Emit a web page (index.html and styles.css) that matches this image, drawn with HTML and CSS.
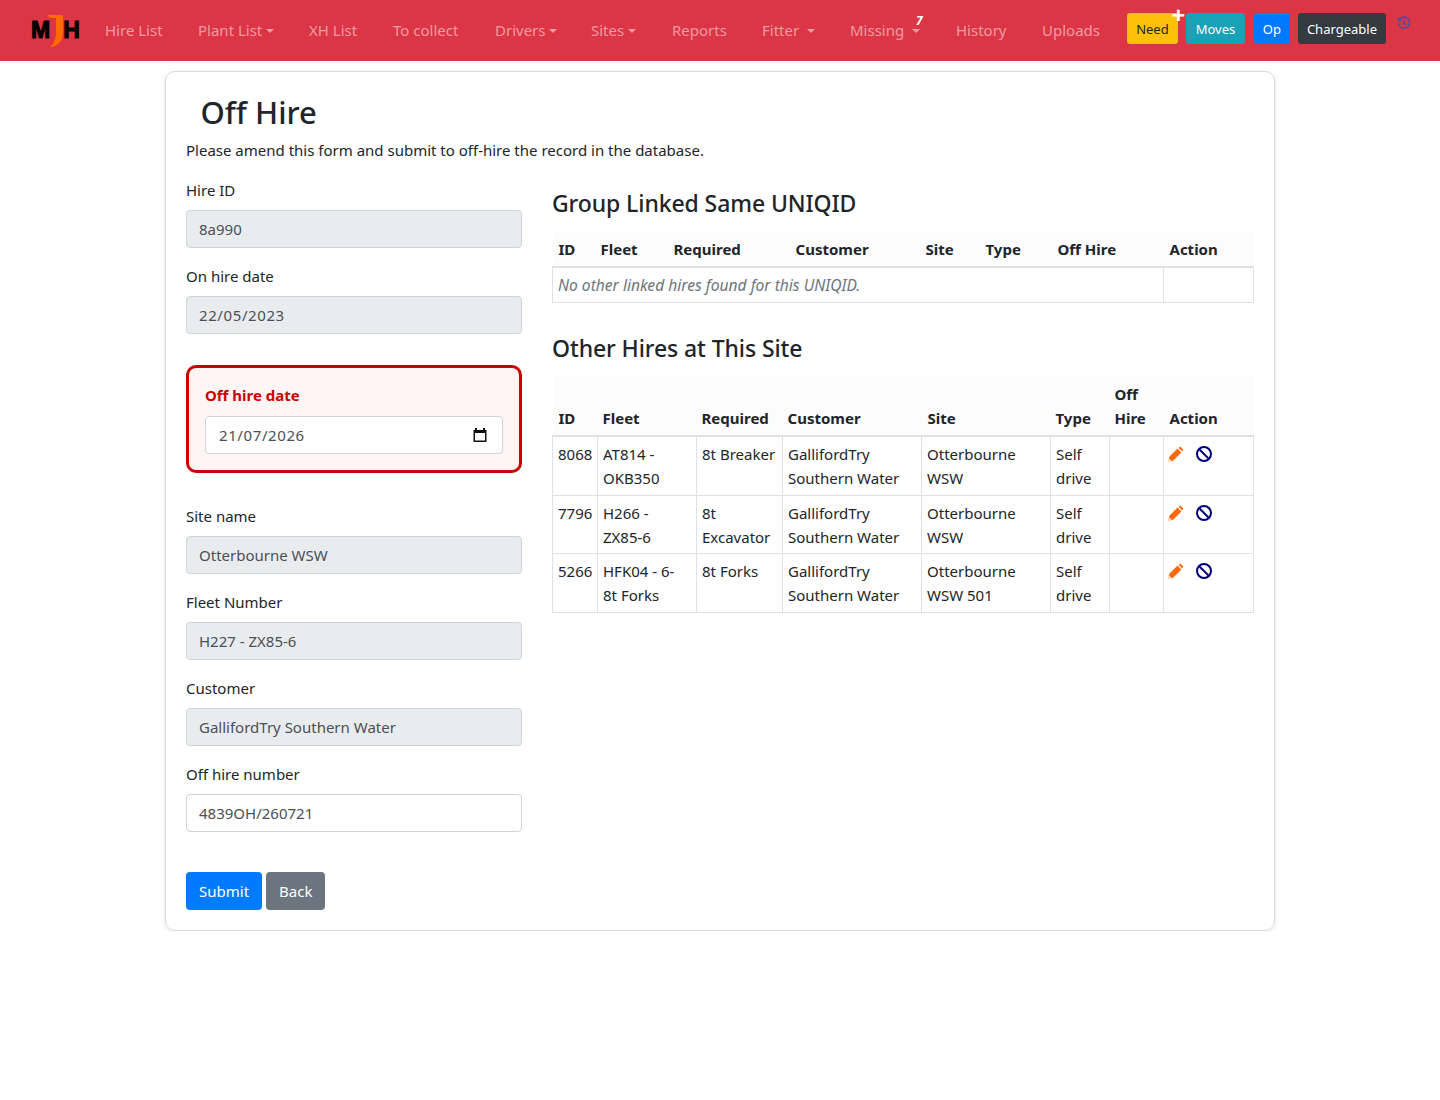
FILE: index.html
```html
<!DOCTYPE html>
<html lang="en">
<head>
    <meta charset="UTF-8">
    <meta name="viewport" content="width=device-width, initial-scale=1.0">
    <title>Off Hire</title>
    <link rel="stylesheet" href="styles.css">
</head>
<body>
    <nav class="navbar">
        <a class="brand" href="#">
            <span class="logo-word">M<span class="logo-gap"></span>H</span>
            <svg class="logo-j" width="17" height="34" viewBox="0 0 17 34"><path d="M0 1 L16 1 L16 19 C16 27 11 32 3 33.5 C7 29 9 25 9 18 L9 4 L3 4 Z" fill="#ff6a00"/></svg>
        </a>
        <ul class="nav-links">
            <li class="w-hire"><a href="#">Hire List</a></li>
            <li class="w-plant"><a href="#" class="caret">Plant List</a></li>
            <li class="w-xh"><a href="#">XH List</a></li>
            <li class="w-collect"><a href="#">To collect</a></li>
            <li class="w-drivers"><a href="#" class="caret">Drivers</a></li>
            <li class="w-sites"><a href="#" class="caret">Sites</a></li>
            <li class="w-reports"><a href="#">Reports</a></li>
            <li class="w-fitter"><a href="#" class="caret wide">Fitter</a></li>
            <li class="w-missing"><a href="#" class="caret wide">Missing</a><span class="count">7</span></li>
            <li class="w-history"><a href="#">History</a></li>
            <li class="w-uploads"><a href="#">Uploads</a></li>
        </ul>
        <div class="nav-btns">
            <a class="btn-sm need" href="#">Need<span class="plus">+</span></a>
            <a class="btn-sm moves" href="#">Moves</a>
            <a class="btn-sm op" href="#">Op</a>
            <a class="btn-sm chargeable" href="#">Chargeable</a>
            <svg class="history-icon" width="14" height="14" viewBox="0 0 16 16" fill="none" stroke="#3f51a5" stroke-width="1.6"><path d="M2.6 4.2A6.4 6.4 0 1 1 1.7 8.6"/><path d="M1.6 1.6v3.4h3.4" stroke-width="1.4"/><path d="M8 4.4V8.4l2.6 1.6"/></svg>
        </div>
    </nav>

    <div class="container">
        <div class="card">
            <h2 class="page-title">Off Hire</h2>
            <p class="intro">Please amend this form and submit to off-hire the record in the database.</p>

            <div class="row">
                <form class="form-col">
                    <div class="form-group">
                        <label>Hire ID</label>
                        <div class="form-control readonly">8a990</div>
                    </div>
                    <div class="form-group">
                        <label>On hire date</label>
                        <div class="form-control readonly date-text">22/05/2023</div>
                    </div>
                    <div class="highlight-box">
                        <label>Off hire date</label>
                        <div class="form-control date-field date-text">
                            <span>21/07/2026</span>
                            <svg width="16" height="16" viewBox="0 0 16 16"><path d="M3 1h2v2h6V1h2v2h1.5v12h-13V3H3z M3 6v7.6h10V6z" fill="#111" fill-rule="evenodd"/></svg>
                        </div>
                    </div>
                    <div class="form-group">
                        <label>Site name</label>
                        <div class="form-control readonly">Otterbourne WSW</div>
                    </div>
                    <div class="form-group">
                        <label>Fleet Number</label>
                        <div class="form-control readonly">H227 - ZX85-6</div>
                    </div>
                    <div class="form-group">
                        <label>Customer</label>
                        <div class="form-control readonly">GallifordTry Southern Water</div>
                    </div>
                    <div class="form-group">
                        <label>Off hire number</label>
                        <div class="form-control">4839OH/260721</div>
                    </div>
                    <div class="form-actions">
                        <a class="btn primary" href="#">Submit</a>
                        <a class="btn secondary" href="#">Back</a>
                    </div>
                </form>

                <div class="tables-col">
                    <h4 class="section-title">Group Linked Same UNIQID</h4>
                    <table class="hire-table linked">
                        <colgroup>
                            <col class="l1"><col class="l2"><col class="l3"><col class="l4"><col class="l5"><col class="l6"><col class="l7"><col class="l8">
                        </colgroup>
                        <thead>
                            <tr><th>ID</th><th>Fleet</th><th>Required</th><th>Customer</th><th>Site</th><th>Type</th><th>Off Hire</th><th>Action</th></tr>
                        </thead>
                        <tbody>
                            <tr><td colspan="7" class="empty">No other linked hires found for this UNIQID.</td><td></td></tr>
                        </tbody>
                    </table>

                    <h4 class="section-title second">Other Hires at This Site</h4>
                    <table class="hire-table others">
                        <colgroup>
                            <col class="o1"><col class="o2"><col class="o3"><col class="o4"><col class="o5"><col class="o6"><col class="o7"><col class="o8">
                        </colgroup>
                        <thead>
                            <tr><th>ID</th><th>Fleet</th><th>Required</th><th>Customer</th><th>Site</th><th>Type</th><th>Off Hire</th><th>Action</th></tr>
                        </thead>
                        <tbody>
                            <tr>
                                <td>8068</td><td>AT814 - OKB350</td><td>8t Breaker</td><td>GallifordTry Southern Water</td><td>Otterbourne WSW</td><td>Self drive</td><td></td>
                                <td class="actions">
                                    <svg width="16" height="16" viewBox="0 0 16 16"><path d="M12.2.5 15.5 3.8 14 5.3 10.7 2zM9.5 2.6l3.9 3.9-8.2 8.2-4.8.9.9-4.8z" fill="#fd6a0a"/><path d="M1 12.4l2.5 2.5-3 .6z" fill="#ffe3d0"/></svg>
                                    <svg width="16" height="16" viewBox="0 0 16 16" fill="none" stroke="#00007f" stroke-width="2"><circle cx="8" cy="8" r="7"/><path d="M3 3l10 10"/></svg>
                                </td>
                            </tr>
                            <tr>
                                <td>7796</td><td>H266 - ZX85-6</td><td>8t Excavator</td><td>GallifordTry Southern Water</td><td>Otterbourne WSW</td><td>Self drive</td><td></td>
                                <td class="actions">
                                    <svg width="16" height="16" viewBox="0 0 16 16"><path d="M12.2.5 15.5 3.8 14 5.3 10.7 2zM9.5 2.6l3.9 3.9-8.2 8.2-4.8.9.9-4.8z" fill="#fd6a0a"/><path d="M1 12.4l2.5 2.5-3 .6z" fill="#ffe3d0"/></svg>
                                    <svg width="16" height="16" viewBox="0 0 16 16" fill="none" stroke="#00007f" stroke-width="2"><circle cx="8" cy="8" r="7"/><path d="M3 3l10 10"/></svg>
                                </td>
                            </tr>
                            <tr>
                                <td>5266</td><td>HFK04 - 6-<br>8t Forks</td><td>8t Forks</td><td>GallifordTry Southern Water</td><td>Otterbourne WSW 501</td><td>Self drive</td><td></td>
                                <td class="actions">
                                    <svg width="16" height="16" viewBox="0 0 16 16"><path d="M12.2.5 15.5 3.8 14 5.3 10.7 2zM9.5 2.6l3.9 3.9-8.2 8.2-4.8.9.9-4.8z" fill="#fd6a0a"/><path d="M1 12.4l2.5 2.5-3 .6z" fill="#ffe3d0"/></svg>
                                    <svg width="16" height="16" viewBox="0 0 16 16" fill="none" stroke="#00007f" stroke-width="2"><circle cx="8" cy="8" r="7"/><path d="M3 3l10 10"/></svg>
                                </td>
                            </tr>
                        </tbody>
                    </table>
                </div>
            </div>
        </div>
    </div>
</body>
</html>
```

FILE: styles.css
```css
* {
    box-sizing: border-box;
}
body {
    margin: 0;
    font-family: "Noto Sans", "Open Sans", sans-serif;
    font-size: 15px;
    line-height: 24px;
    color: #212529;
    background: #fff;
}
a {
    text-decoration: none;
}

/* navbar */
.navbar {
    display: flex;
    align-items: center;
    height: 61px;
    padding-left: 31px;
    background: #dc3545;
}
.brand {
    position: relative;
    width: 51px;
    height: 34px;
    margin-right: 11px;
    flex: none;
}
.logo-word {
    display: flex;
    position: absolute;
    left: 0;
    top: 4px;
    font-family: "Liberation Sans", sans-serif;
    font-weight: 700;
    font-size: 23px;
    line-height: 24px;
    color: #000;
    -webkit-text-stroke: 1px #000;
}
.logo-gap {
    width: 13px;
}
.logo-j {
    position: absolute;
    left: 16px;
    top: 0;
}
.nav-links {
    display: flex;
    list-style: none;
    margin: -2px 0 0;
    padding: 0;
    flex: none;
}
.nav-links li {
    position: relative;
    padding-left: 12px;
}
.nav-links a {
    color: rgba(255,255,255,.5);
    white-space: nowrap;
}
.w-hire { width: 93px; }
.w-plant { width: 111px; }
.w-xh { width: 84px; }
.w-collect { width: 102px; }
.w-drivers { width: 96px; }
.w-sites { width: 81px; }
.w-reports { width: 90px; }
.w-fitter { width: 88px; }
.w-missing { width: 106px; }
.w-history { width: 86px; }
.w-uploads { width: 86px; }
.caret::after {
    content: "";
    display: inline-block;
    margin-left: 4px;
    vertical-align: 3px;
    border-top: 4px solid;
    border-left: 4px solid transparent;
    border-right: 4px solid transparent;
}
.caret.wide::after {
    margin-left: 8px;
}
.count {
    position: absolute;
    left: 78px;
    top: -9px;
    font-size: 12px;
    font-weight: 700;
    font-style: italic;
    color: #fff;
}
.nav-btns {
    display: flex;
    align-items: flex-start;
    align-self: flex-start;
    gap: 8px;
    margin: 13px 0 0 auto;
    padding-right: 29px;
    position: relative;
}
.btn-sm {
    position: relative;
    height: 31px;
    padding: 0 9px;
    font-size: 13px;
    line-height: 32px;
    border-radius: 3px;
    color: #fff;
}
.need { background: #ffc107; color: #212529; padding: 0 9.5px; }
.moves { background: #17a2b8; padding: 0 9.5px; }
.op { background: #007bff; margin-left: 1px; }
.chargeable { background: #343a40; }
.plus {
    position: absolute;
    right: -7px;
    top: -10px;
    color: #fff;
    font-size: 24px;
    font-weight: 700;
    line-height: 24px;
}
.history-icon {
    margin: 3px 0 0 3px;
}

/* page */
.container {
    width: 1110px;
    margin: 10px auto 0;
}
.card {
    height: 860px;
    padding: 20px;
    border: 1px solid #d9dcdf;
    border-radius: 10px;
    box-shadow: 0 1px 4px rgba(0,0,0,.12);
}
.page-title {
    margin: 1px 0 7px 14.5px;
    font-size: 31px;
    line-height: 38px;
    font-weight: 500;
}
.intro {
    margin: 0 0 15px;
}
.row {
    display: grid;
    grid-template-columns: 336px 702px;
    column-gap: 30px;
}
.form-group {
    margin-bottom: 15px;
}
label {
    display: block;
    padding-top: 1px;
    margin-bottom: 8px;
}
.form-control {
    height: 38px;
    padding: 0 12px;
    line-height: 36px;
    color: #495057;
    background: #fff;
    border: 1px solid #ced4da;
    border-radius: 4px;
}
.readonly {
    background: #e9ecef;
}
.date-text {
    letter-spacing: .6px;
}
.highlight-box {
    height: 108px;
    margin: 31px 0 30px;
    padding: 15px 16px 0;
    background: #fff5f5;
    border: 3px solid #cc0000;
    border-radius: 10px;
}
.highlight-box label {
    padding-top: 0;
    margin: 0 0 9px;
    font-weight: 700;
    color: #cc0000;
}
.date-field {
    display: flex;
    align-items: center;
    justify-content: space-between;
    padding: 0 14px 0 13px;
}
.form-actions {
    display: flex;
    gap: 4px;
    margin-top: 40px;
}
.btn {
    height: 38px;
    padding: 0 13px;
    line-height: 38px;
    color: #fff;
    border-radius: 4px;
}
.primary { background: #007bff; }
.secondary { background: #6c757d; }

/* tables */
.tables-col {
    padding-top: 12px;
}
.section-title {
    margin: 0 0 14px;
    font-size: 23px;
    line-height: 29px;
    font-weight: 500;
    letter-spacing: -.1px;
}
.section-title.second {
    margin: 31px 0 13px;
}
.hire-table {
    width: 701px;
    table-layout: fixed;
    border-collapse: collapse;
}
.hire-table th {
    padding: 5px;
    text-align: left;
    vertical-align: bottom;
    font-weight: 700;
    background: #fcfcfc;
    border-bottom: 2px solid #dee2e6;
}
.hire-table td {
    padding: 5px;
    vertical-align: top;
    border: 1px solid #dee2e6;
}
.others th {
    padding: 6px 5px 5px;
}
.hire-table th:first-child,
.hire-table th:nth-child(5),
.hire-table th:nth-child(8) {
    padding-left: 6px;
}
.others tr:nth-child(2) td {
    padding-bottom: 4px;
}
.empty {
    font-style: italic;
    font-size: 15.6px;
    color: #6c757d;
}
.l1 { width: 43px; }
.l2 { width: 73px; }
.l3 { width: 122px; }
.l4 { width: 129px; }
.l5 { width: 61px; }
.l6 { width: 72px; }
.l7 { width: 111px; }
.l8 { width: 90px; }
.o1 { width: 45px; }
.o2 { width: 99px; }
.o3 { width: 86px; }
.o4 { width: 139px; }
.o5 { width: 129px; }
.o6 { width: 59px; }
.o7 { width: 54px; }
.o8 { width: 90px; }
.hire-table .actions {
    padding-left: 4px;
}
.actions svg {
    vertical-align: -2px;
}
.actions svg + svg {
    margin-left: 8px;
}
```
